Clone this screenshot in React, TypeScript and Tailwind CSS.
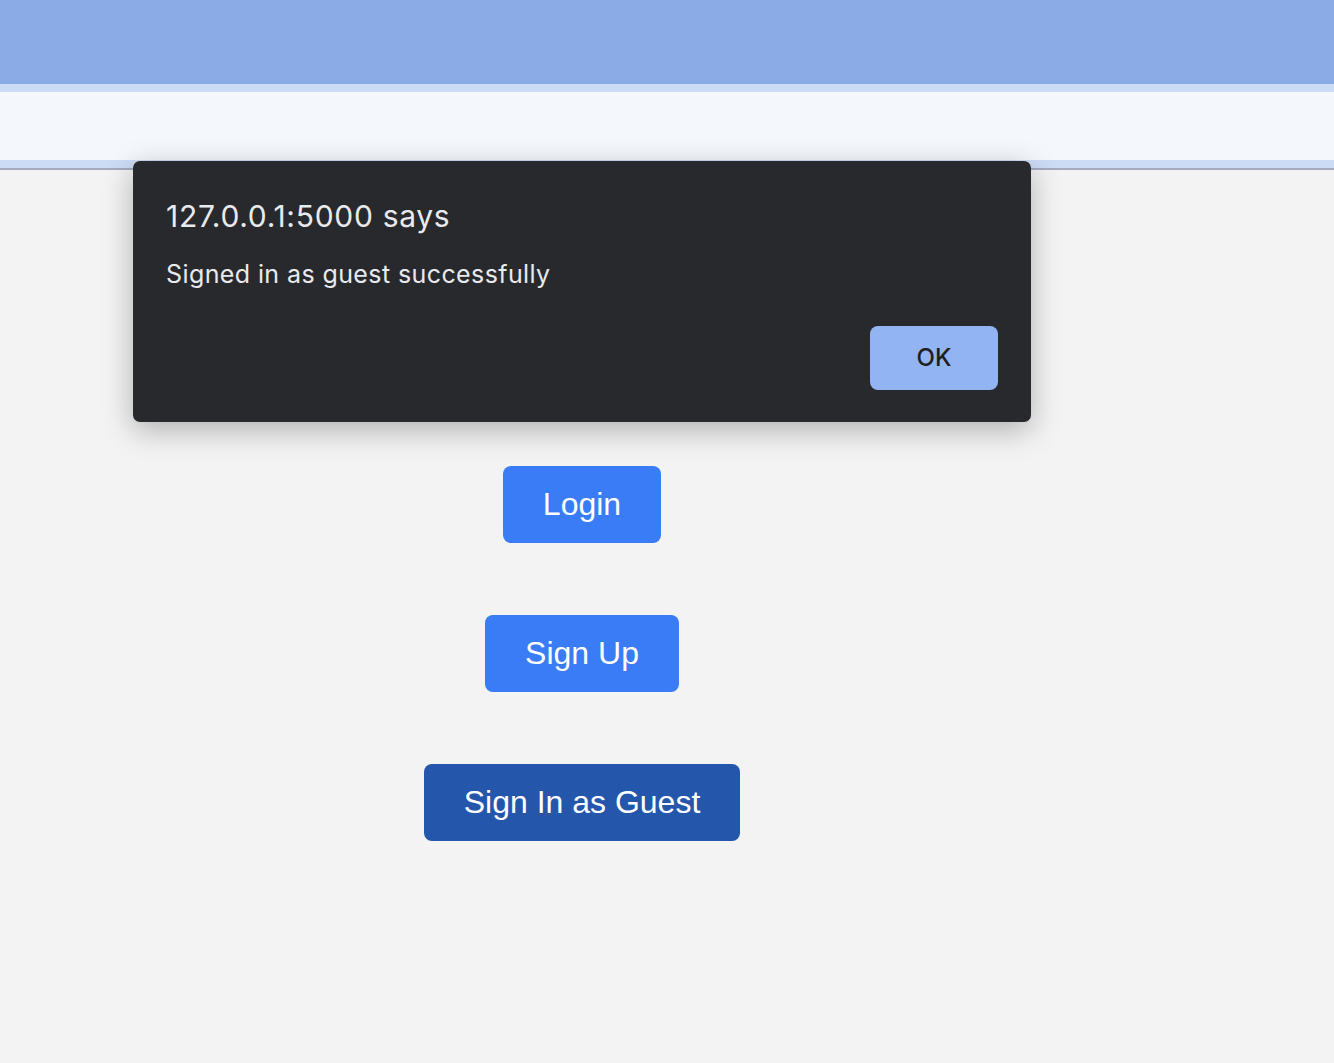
import React from "react";

export default function App() {
  return (
    <div className="relative min-h-[1063px] w-full bg-[#f3f3f3] overflow-hidden">
      {/* Browser-ish header bands */}
      <div className="h-[84px] bg-[#8aabe5]" />
      <div className="h-[8px] bg-[#cddcf5]" />
      <div className="h-[68px] bg-[#f4f7fc]" />
      <div className="h-[8px] bg-[#cddcf5]" />
      <div className="h-[2px] bg-[#a3abbd]" />

      {/* Page content */}
      <div className="w-[1164px] flex flex-col items-center pt-[296px] gap-[72px] font-['Liberation_Sans',Arial,sans-serif]">
        <button className="bg-[#397cf6] text-white text-[32px] leading-[37px] px-[40px] py-[20px] rounded-[8px]">
          Login
        </button>
        <button className="bg-[#397cf6] text-white text-[32px] leading-[37px] px-[40px] py-[20px] rounded-[8px]">
          Sign Up
        </button>
        <button className="bg-[#2456ab] text-white text-[32px] leading-[37px] px-[40px] py-[20px] rounded-[8px]">
          Sign In as Guest
        </button>
      </div>

      {/* Alert dialog */}
      <div className="absolute left-[133px] top-[161px] w-[898px] h-[261px] bg-[#28292d] rounded-[7px] shadow-[0_8px_30px_rgba(0,0,0,0.28)] px-[33px] pt-[37px] pb-[32px] flex flex-col font-['Inter',sans-serif]">
        <div className="text-[30px] leading-[36px] text-[#e8eaed] tracking-[0.7px]">127.0.0.1:5000 says</div>
        <div className="mt-[25px] text-[25px] leading-[30px] text-[#e8eaed] tracking-[0.4px]">Signed in as guest successfully</div>
        <div className="mt-auto flex justify-end">
          <button className="w-[128px] h-[64px] bg-[#93b4f2] rounded-[8px] text-[24px] text-[#1f1f1f] font-medium">
            OK
          </button>
        </div>
      </div>
    </div>
  );
}
